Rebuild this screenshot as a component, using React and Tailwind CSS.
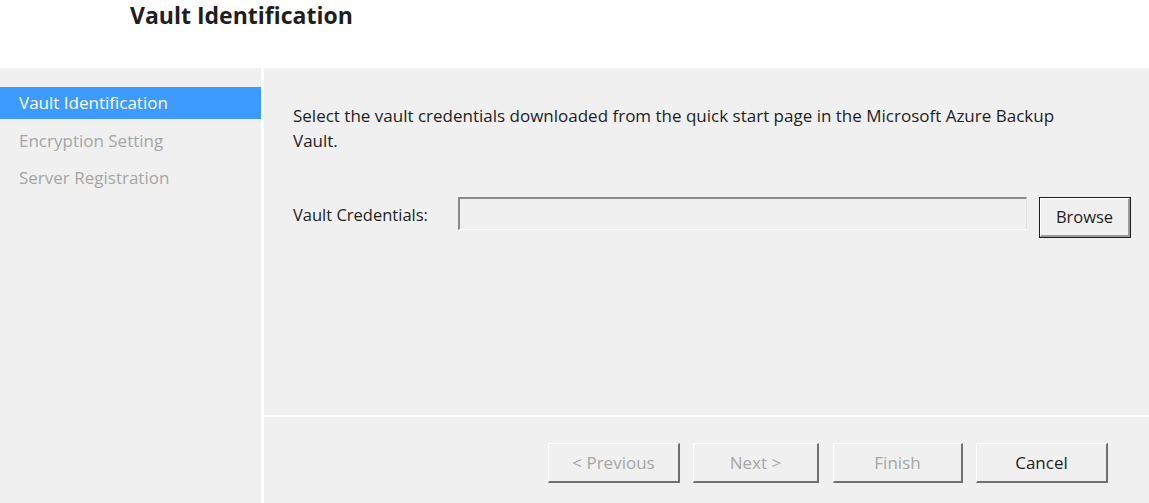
export default function App() {
  const font = { fontFamily: '"Open Sans", "Noto Sans", sans-serif' };
  return (
    <div className="w-[1149px] h-[503px] bg-white flex flex-col overflow-hidden" style={font}>
      <div className="h-[68px] shrink-0 pl-[130px]">
        <h1 className="text-[23px] font-bold leading-[30px] text-[#1e1e1e]">Vault Identification</h1>
      </div>
      <div className="flex flex-1 bg-[#f0f0f0]">
        <div className="w-[261px] shrink-0 pt-[19px] text-[17px]">
          <div className="h-[32px] bg-[#3d9bff] text-white flex items-center pl-[19px]">Vault Identification</div>
          <div className="h-[44px] text-[#a6a6a6] flex items-center pl-[19px]">Encryption Setting</div>
          <div className="h-[30px] text-[#a6a6a6] flex items-center pl-[19px]">Server Registration</div>
        </div>
        <div className="w-[3px] bg-white shrink-0" />
        <div className="flex-1 flex flex-col">
          <div className="h-[347px] shrink-0 pl-[29px] pt-[35px] pr-[19px] text-[17px] text-[#1e1e1e]">
            <p className="leading-[25px] w-[790px]">
              Select the vault credentials downloaded from the quick start page in the Microsoft Azure Backup Vault.
            </p>
            <div className="flex items-start mt-[44px]">
              <span className="w-[165px] h-[36px] leading-[36px] text-[16.5px]">Vault Credentials:</span>
              <div className="w-[569px] h-[33px] border-t-2 border-l-2 border-t-[#8a8a8a] border-l-[#8a8a8a] border-b border-r border-b-white border-r-[#e3e3e3] bg-[#f0f0f0]" />
              <button className="ml-[12px] w-[92px] h-[41px] border border-[#1e1e1e] bg-[#f0f0f0] text-[16.5px] text-[#1e1e1e]">
                <span className="flex items-center justify-center w-full h-full border-t border-l border-white border-b-2 border-r-2 border-b-[#9a9a9a] border-r-[#9a9a9a]">Browse</span>
              </button>
            </div>
          </div>
          <div className="h-[2px] bg-white shrink-0" />
          <div className="flex pt-[26px] pl-[284px] text-[17px]">
            <button className="w-[132px] h-[40px] border-t border-l border-white border-b-2 border-r-2 border-b-[#707070] border-r-[#707070] text-[#a6a6a6]">&lt; Previous</button>
            <button className="ml-[13px] w-[126px] h-[40px] border-t border-l border-white border-b-2 border-r-2 border-b-[#707070] border-r-[#707070] text-[#a6a6a6]">Next &gt;</button>
            <button className="ml-[14px] w-[130px] h-[40px] border-t border-l border-white border-b-2 border-r-2 border-b-[#707070] border-r-[#707070] text-[#a6a6a6]">Finish</button>
            <button className="ml-[13px] w-[132px] h-[40px] border-t border-l border-white border-b-2 border-r-2 border-b-[#707070] border-r-[#707070] text-[#1e1e1e]">Cancel</button>
          </div>
        </div>
      </div>
    </div>
  );
}
